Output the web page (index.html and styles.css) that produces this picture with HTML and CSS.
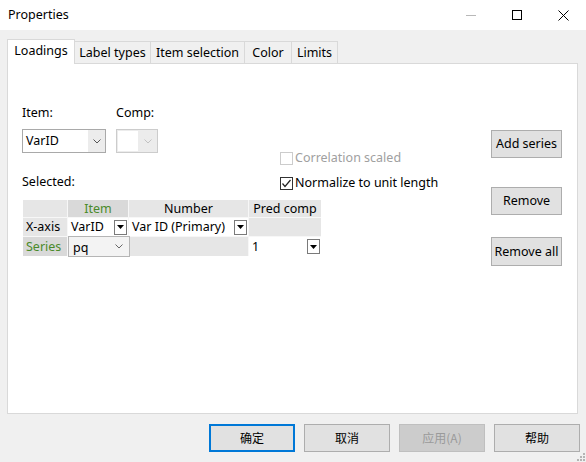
FILE: index.html
```html
<!DOCTYPE html>
<html>
<head>
<meta charset="utf-8">
<link rel="stylesheet" href="styles.css">
</head>
<body>
<div class="window">
  <div class="titlebar">
    <span class="title">Properties</span>
    <div class="caption">
      <div class="cap"><svg width="10" height="10" viewBox="0 0 10 10"><line x1="0" y1="5.5" x2="10" y2="5.5" stroke="#b8b8b8" stroke-width="1"/></svg></div>
      <div class="cap"><svg width="10" height="10" viewBox="0 0 10 10"><rect x="0.5" y="0.5" width="9" height="9" fill="none" stroke="#000" stroke-width="1"/></svg></div>
      <div class="cap"><svg width="11" height="11" viewBox="0 0 11 11"><path d="M0.5 0.5 L10.5 10.5 M10.5 0.5 L0.5 10.5" stroke="#000" stroke-width="1"/></svg></div>
    </div>
  </div>
  <div class="main">
    <div class="tabs">
      <div class="tab active w-load">Loadings</div>
      <div class="tab w-label">Label types</div>
      <div class="tab w-item">Item selection</div>
      <div class="tab w-color">Color</div>
      <div class="tab w-limits">Limits</div>
    </div>
    <div class="panel">
      <div class="left">
        <div class="top">
          <div class="fields">
            <div class="fields-row">
              <div class="field f-item">
                <div class="lbl">Item:</div>
                <div class="combo">
                  <div class="combo-text">VarID</div>
                  <div class="combo-btn"><svg width="8" height="5" viewBox="0 0 8 5"><polyline points="0.5,0.5 4,4 7.5,0.5" fill="none" stroke="#555" stroke-width="1"/></svg></div>
                </div>
              </div>
              <div class="field f-comp">
                <div class="lbl">Comp:</div>
                <div class="combo disabled">
                  <div class="combo-white"></div>
                  <div class="combo-btn"><svg width="8" height="5" viewBox="0 0 8 5"><polyline points="0.5,0.5 4,4 7.5,0.5" fill="none" stroke="#c2c2c2" stroke-width="1"/></svg></div>
                </div>
              </div>
            </div>
            <div class="lbl selected">Selected:</div>
          </div>
          <div class="checks">
            <div class="check disabled"><span class="box"></span><span>Correlation scaled</span></div>
            <div class="check"><span class="box checked"><svg width="11" height="11" viewBox="0 0 11 11"><polyline points="1.5,5.5 4,8.5 9.5,2" fill="none" stroke="#222" stroke-width="1.2"/></svg></span><span>Normalize to unit length</span></div>
          </div>
        </div>
        <div class="grid">
          <div class="cell head"></div>
          <div class="cell head sel center">Item</div>
          <div class="cell head center">Number</div>
          <div class="cell head center">Pred comp</div>

          <div class="cell head rowh">X-axis</div>
          <div class="cell white"><span class="ct">VarID</span><span class="dd"><svg width="7" height="4" viewBox="0 0 7 4"><polygon points="0,0 7,0 3.5,4" fill="#000"/></svg></span></div>
          <div class="cell white"><span class="ct">Var ID (Primary)</span><span class="dd"><svg width="7" height="4" viewBox="0 0 7 4"><polygon points="0,0 7,0 3.5,4" fill="#000"/></svg></span></div>
          <div class="cell head"></div>

          <div class="cell head sel rowh">Series</div>
          <div class="cell combo-cell"><div class="pq"><span class="ct">pq</span><svg width="8" height="5" viewBox="0 0 8 5"><polyline points="0.5,0.5 4,4 7.5,0.5" fill="none" stroke="#666" stroke-width="1"/></svg></div></div>
          <div class="cell head"></div>
          <div class="cell white"><span class="ct">1</span><span class="dd"><svg width="7" height="4" viewBox="0 0 7 4"><polygon points="0,0 7,0 3.5,4" fill="#000"/></svg></span></div>
        </div>
      </div>
      <div class="actions">
        <div class="btn a1">Add series</div>
        <div class="btn a2">Remove</div>
        <div class="btn a3">Remove all</div>
      </div>
    </div>
    <div class="footer">
      <div class="btn fb default">确定</div>
      <div class="btn fb">取消</div>
      <div class="btn fb off">应用(A)</div>
      <div class="btn fb">帮助</div>
      <svg class="grip" width="8" height="8" viewBox="0 0 8 8">
        <rect x="6" y="0" width="2" height="2" fill="#b4b4b4"/>
        <rect x="3" y="3" width="2" height="2" fill="#b4b4b4"/>
        <rect x="6" y="3" width="2" height="2" fill="#b4b4b4"/>
        <rect x="0" y="6" width="2" height="2" fill="#b4b4b4"/>
        <rect x="3" y="6" width="2" height="2" fill="#b4b4b4"/>
        <rect x="6" y="6" width="2" height="2" fill="#b4b4b4"/>
      </svg>
    </div>
  </div>
</div>
</body>
</html>
```

FILE: styles.css
```css
html, body {
  margin: 0;
  padding: 0;
}
body {
  width: 586px;
  height: 462px;
  overflow: hidden;
  background: #f0f0f0;
  font-family: "Noto Sans", "Noto Sans CJK SC", sans-serif;
  font-size: 12.5px;
  color: #000;
}
.window {
  width: 586px;
  height: 462px;
}
.titlebar {
  height: 30px;
  background: #fff;
  display: flex;
  align-items: center;
}
.title {
  flex: 1;
  padding-left: 8px;
  line-height: 16px;
}
.caption {
  display: flex;
}
.cap {
  width: 46px;
  height: 30px;
  display: flex;
  align-items: center;
  justify-content: center;
}
.main {
  padding: 9px 8px 0 7px;
}
.tabs {
  display: flex;
  align-items: flex-end;
  height: 24px;
  position: relative;
  z-index: 2;
}
.tab {
  box-sizing: border-box;
  height: 22px;
  border: 1px solid #d9d9d9;
  border-bottom: none;
  background: #f0f0f0;
  display: flex;
  align-items: center;
  justify-content: center;
  margin-left: -1px;
  line-height: 16px;
}
.tab.active {
  height: 25px;
  margin-left: 0;
  margin-bottom: -1px;
  background: #fff;
  align-items: flex-start;
  padding-top: 3px;
  position: relative;
  z-index: 3;
}
.w-load { width: 68px; }
.w-label { width: 77px; }
.w-item { width: 95px; }
.w-color { width: 48px; }
.w-limits { width: 47px; }
.panel {
  box-sizing: border-box;
  height: 351px;
  border: 1px solid #d9d9d9;
  background: #fff;
  display: flex;
  position: relative;
  z-index: 1;
}
.left {
  flex: 1;
  padding: 41px 0 0 14px;
}
.top {
  display: flex;
}
.fields {
  width: 258px;
}
.fields-row {
  display: flex;
  gap: 10px;
}
.lbl {
  line-height: 16px;
}
.f-item { width: 84px; }
.f-comp { width: 42px; }
.combo {
  box-sizing: border-box;
  margin-top: 8px;
  height: 24px;
  border: 1px solid #a9a9a9;
  background: #fff;
  display: flex;
}
.combo-text {
  flex: 1;
  padding-left: 3px;
  line-height: 22px;
}
.combo-btn {
  width: 17px;
  background: #ececec;
  display: flex;
  align-items: center;
  justify-content: center;
}
.combo.disabled {
  border-color: #cccccc;
  background: #ececec;
}
.combo.disabled .combo-white {
  width: 20px;
  margin: 1px 0 1px 1px;
  background: #fff;
}
.combo.disabled .combo-btn {
  flex: 1;
}
.selected {
  margin-top: 21px;
}
.checks {
  align-self: flex-end;
  display: flex;
  flex-direction: column;
  gap: 9px;
  margin-bottom: -1px;
}
.check {
  display: flex;
  align-items: center;
  line-height: 16px;
}
.box {
  box-sizing: border-box;
  width: 13px;
  height: 13px;
  border: 1px solid #333;
  background: #fff;
  margin-right: 2px;
  display: flex;
  align-items: center;
  justify-content: center;
}
.check.disabled {
  color: #a0a0a0;
}
.check.disabled .box {
  border-color: #cccccc;
}
.grid {
  margin: 10px 0 0 1px;
  width: 298px;
  display: grid;
  grid-template-columns: 44px 60px 119px 72px;
  grid-template-rows: 17px 18px 19px;
  gap: 1px;
  background: #f7f7f7;
}
.cell {
  display: flex;
  align-items: center;
  line-height: 16px;
  white-space: nowrap;
  min-width: 0;
}
.head {
  background: #e6e6e6;
}
.head.sel {
  background: #d9d9d9;
  color: #4a8a2a;
}
.center {
  justify-content: center;
}
.rowh {
  padding-left: 3px;
}
.white {
  background: #fff;
  justify-content: space-between;
}
.ct {
  padding-left: 3px;
}
.dd {
  box-sizing: border-box;
  width: 13px;
  height: 15px;
  margin-right: 1px;
  border: 1px solid #7a7a7a;
  background: #fff;
  display: flex;
  align-items: center;
  justify-content: center;
}
.combo-cell {
  background: #e6e6e6;
  position: relative;
}
.pq {
  box-sizing: border-box;
  position: absolute;
  left: 0;
  top: -1px;
  width: 62px;
  height: 21px;
  border: 1px solid #b5b5b5;
  background: #f3f3f3;
  display: flex;
  align-items: center;
  justify-content: space-between;
  padding-right: 6px;
}
.pq .ct {
  padding-left: 4px;
  margin-top: 2px;
}
.actions {
  width: 71px;
  margin: 66px 15px 0 0;
  display: flex;
  flex-direction: column;
}
.btn {
  box-sizing: border-box;
  height: 28px;
  border: 1px solid #adadad;
  background: #e1e1e1;
  display: flex;
  align-items: center;
  justify-content: center;
  line-height: 16px;
}
.a2 { margin-top: 29px; }
.a3 { margin-top: 22px; height: 29px; }
.footer {
  position: relative;
  height: 48px;
  display: flex;
  justify-content: flex-end;
  align-items: flex-start;
  gap: 9px;
  padding: 10px 6px 0 0;
  box-sizing: border-box;
  margin-right: -8px;
}
.fb {
  width: 86px;
  font-family: "Noto Sans CJK SC", "Noto Sans", sans-serif;
  font-size: 12px;
}
.fb.default {
  border: 2px solid #0078d7;
}
.fb.off {
  background: #cccccc;
  border-color: #bfbfbf;
  color: #9a9a9a;
}
.grip {
  position: absolute;
  right: 1px;
  bottom: 1px;
}
```
